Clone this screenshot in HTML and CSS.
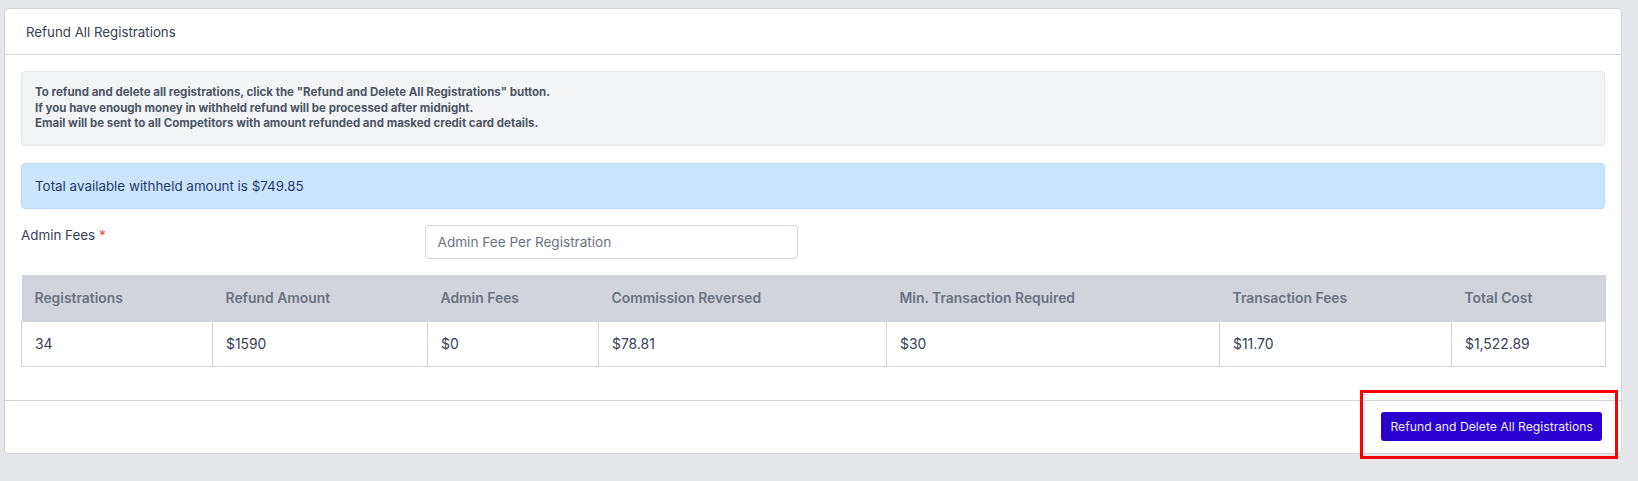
FILE: index.html
```html
<!DOCTYPE html>
<html lang="en">
<head>
<meta charset="utf-8">
<title>Refund All Registrations</title>
<link rel="stylesheet" href="styles.css">
</head>
<body>
<div class="page">
  <div class="card">
    <div class="card-header">Refund All Registrations</div>
    <div class="card-body">
      <div class="note">
        <div>To refund and delete all registrations, click the "Refund and Delete All Registrations" button.</div>
        <div>If you have enough money in withheld refund will be processed after midnight.</div>
        <div>Email will be sent to all Competitors with amount refunded and masked credit card details.</div>
      </div>
      <div class="alert">Total available withheld amount is $749.85</div>
      <div class="form-row">
        <label class="label" for="fee">Admin Fees <span class="req">*</span></label>
        <input class="input" id="fee" type="text" placeholder="Admin Fee Per Registration">
      </div>
      <table class="summary">
        <colgroup>
          <col class="c1"><col class="c2"><col class="c3"><col class="c4"><col class="c5"><col class="c6"><col class="c7">
        </colgroup>
        <thead>
          <tr>
            <th>Registrations</th>
            <th>Refund Amount</th>
            <th>Admin Fees</th>
            <th>Commission Reversed</th>
            <th>Min. Transaction Required</th>
            <th>Transaction Fees</th>
            <th>Total Cost</th>
          </tr>
        </thead>
        <tbody>
          <tr>
            <td>34</td>
            <td>$1590</td>
            <td>$0</td>
            <td>$78.81</td>
            <td>$30</td>
            <td>$11.70</td>
            <td>$1,522.89</td>
          </tr>
        </tbody>
      </table>
    </div>
    <div class="card-footer">
      <button class="btn" type="button">Refund and Delete All Registrations</button>
    </div>
  </div>
  <div class="highlight"></div>
</div>
</body>
</html>
```

FILE: styles.css
```css
* { box-sizing: border-box; }

html, body {
  margin: 0;
  padding: 0;
  background: #e5e7eb;
}

body {
  font-family: Inter, "Noto Sans", "Liberation Sans", sans-serif;
  color: #374151;
}

.page {
  position: relative;
  padding: 8px 16px 27px 4px;
}

.card {
  background: #fff;
  border: 1px solid #d1d5db;
  border-radius: 4px;
}

.card-header {
  height: 46px;
  display: flex;
  align-items: center;
  padding: 0 21px;
  font-size: 13.3px;
  color: #374151;
  border-bottom: 1px solid #d1d5db;
}

.card-body {
  padding: 16px 16px 33px;
}

.note {
  background: #f3f4f6;
  border: 1px solid #e5e7eb;
  border-radius: 4px;
  padding: 13px 13px;
  font-size: 11.5px;
  font-weight: 700;
  line-height: 15.5px;
  color: #4b5563;
}

.alert {
  margin-top: 17px;
  background: #cce5ff;
  border: 1px solid #b8daff;
  border-radius: 4px;
  padding: 12px 13px;
  font-size: 13.4px;
  line-height: 20px;
  color: #1e3a6e;
}

.form-row {
  margin-top: 16px;
  display: grid;
  grid-template-columns: 1fr 1fr 1fr 1fr;
  column-gap: 30px;
  align-items: start;
}

.label {
  font-size: 13.4px;
  line-height: 20px;
  color: #374151;
}

.req { color: #ef4444; }

.input {
  height: 34px;
  width: 100%;
  border: 1px solid #d1d5db;
  border-radius: 4px;
  padding: 0 12px;
  font-family: inherit;
  font-size: 13.6px;
  color: #374151;
  background: #fff;
}

.input::placeholder { color: #6b7280; }

.summary {
  margin-top: 16px;
  width: 100%;
  border-collapse: collapse;
  table-layout: fixed;
  font-size: 13.9px;
}

.c1 { width: 191px; }
.c2 { width: 215px; }
.c3 { width: 171px; }
.c4 { width: 288px; }
.c5 { width: 333px; }
.c6 { width: 232px; }
.c7 { width: 154px; }

.summary th {
  background: #d1d5db;
  color: #6b7280;
  font-weight: 600;
  text-align: left;
  padding: 13px 13px;
  line-height: 20px;
}

.summary td {
  border: 1px solid #d1d5db;
  padding: 12px 13px;
  line-height: 20px;
  color: #374151;
}

.card-footer {
  border-top: 1px solid #d1d5db;
  height: 53px;
  display: flex;
  justify-content: flex-end;
  align-items: center;
  padding: 0 19px;
}

.btn {
  height: 29px;
  padding: 0 9px;
  background: #2a00d0;
  color: #f0eeff;
  border: none;
  border-radius: 3px;
  font-family: inherit;
  font-size: 12.2px;
}

.highlight {
  position: absolute;
  left: 1360px;
  top: 390px;
  width: 258px;
  height: 69px;
  border: 3px solid #ff0000;
  pointer-events: none;
}
```
